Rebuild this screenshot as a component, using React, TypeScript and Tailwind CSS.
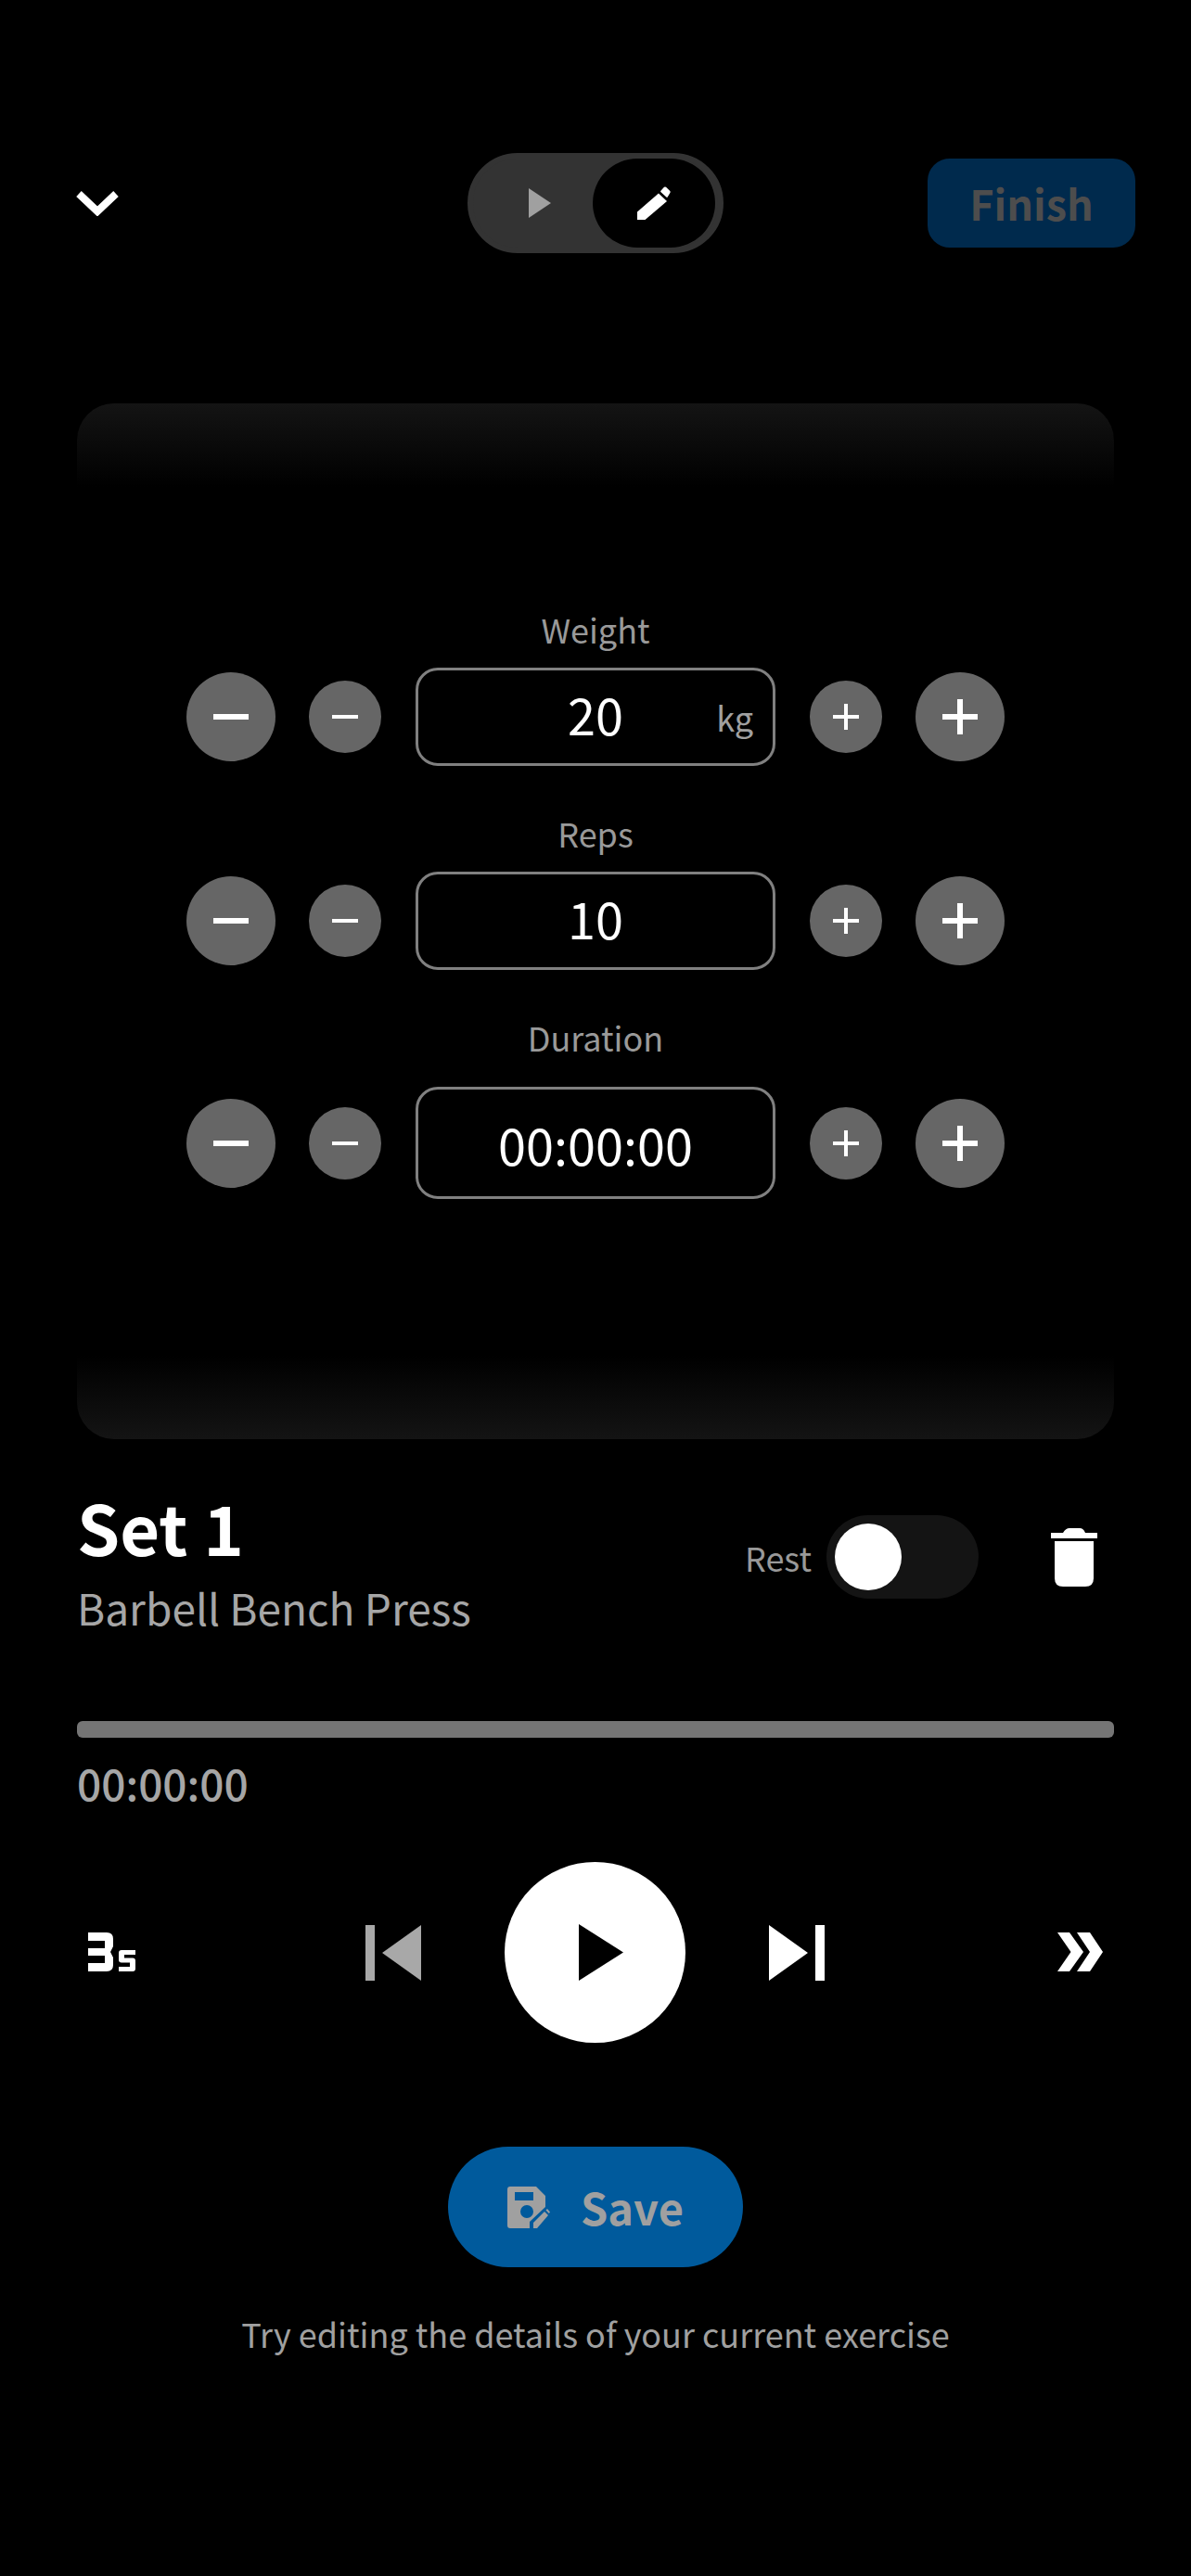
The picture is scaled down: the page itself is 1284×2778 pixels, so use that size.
import React from "react";

function Minus({ big }: { big: boolean }) {
  return big ? (
    <svg width="40" height="40" viewBox="0 0 40 40"><rect x="1" y="17" width="38" height="6" fill="#fff" /></svg>
  ) : (
    <svg width="30" height="30" viewBox="0 0 30 30"><rect x="1" y="13" width="28" height="4" fill="#fff" /></svg>
  );
}
function Plus({ big }: { big: boolean }) {
  return big ? (
    <svg width="40" height="40" viewBox="0 0 40 40"><rect x="1" y="17" width="38" height="6" fill="#fff" /><rect x="17" y="1" width="6" height="38" fill="#fff" /></svg>
  ) : (
    <svg width="30" height="30" viewBox="0 0 30 30"><rect x="1" y="13" width="28" height="4" fill="#fff" /><rect x="13" y="1" width="4" height="28" fill="#fff" /></svg>
  );
}

function Stepper({ label, value, unit, tall, labelGap }: { label: string; value: string; unit?: string; tall?: boolean; labelGap: string }) {
  return (
    <div className="flex flex-col items-center">
      <div className={`text-[36px] leading-[44px] text-[#999999] ${labelGap}`}>{label}</div>
      <div className="flex items-center">
        <div className="w-[96px] h-[96px] rounded-full bg-[#666666] flex items-center justify-center"><Minus big /></div>
        <div className="ml-[36px] w-[78px] h-[78px] rounded-full bg-[#666666] flex items-center justify-center"><Minus big={false} /></div>
        <div className={`relative ml-[37px] w-[388px] ${tall ? "h-[121px]" : "h-[106px]"} rounded-[24px] border-[3px] border-[#808080] flex items-center justify-center text-[54px] text-white`}>
          <span className={tall ? "mt-[2px]" : "mb-[7px]"}>{value}</span>
          {unit && <span className="absolute right-[21px] top-[25px] text-[36px] leading-[50px] text-[#a0a0a0]">{unit}</span>}
        </div>
        <div className="ml-[37px] w-[78px] h-[78px] rounded-full bg-[#666666] flex items-center justify-center"><Plus big={false} /></div>
        <div className="ml-[36px] w-[96px] h-[96px] rounded-full bg-[#666666] flex items-center justify-center"><Plus big /></div>
      </div>
    </div>
  );
}

export default function App() {
  return (
    <div className="w-[1284px] h-[2778px] bg-black overflow-hidden flex flex-col font-['Noto_Sans_CJK_JP',sans-serif]">
      {/* header */}
      <div className="mt-[165px] h-[108px] grid grid-cols-[1fr_auto_1fr] items-center px-[60px]">
        <svg className="ml-[22px]" width="46" height="28" viewBox="0 0 46 28">
          <path d="M3 4 L23 23 L43 4" fill="none" stroke="#fff" strokeWidth="8" />
        </svg>
        <div className="w-[276px] h-[108px] rounded-full bg-[#333333] border-[6px] border-[#333333] flex items-center">
          <div className="flex-1 flex justify-center pl-[15px]">
            <svg width="24" height="32" viewBox="0 0 24 32"><path d="M0 0 L24 16 L0 32 Z" fill="#a0a0a0" /></svg>
          </div>
          <div className="mr-[3px] w-[132px] h-[96px] rounded-full bg-black flex items-center justify-center">
            <svg width="36" height="36" viewBox="0 0 36 36" fill="#fff">
              <path d="M0 36 V27.5 L23 7.5 L32 16 L8.5 36 Z" />
              <path d="M29 0.8 Q30 0 31 0.8 L35.4 5 Q36 6 35.4 7 L32.5 11.8 Q32 12.2 31.3 11.6 L25.3 6 Q24.8 5.4 25.4 4.8 Z" />
            </svg>
          </div>
        </div>
        <div className="justify-self-end w-[224px] h-[96px] rounded-[24px] bg-[#002a4d] flex items-center justify-center text-[45px] font-bold text-[#4d4d4d]">Finish</div>
      </div>

      {/* card */}
      <div className="mt-[162px] mx-[83px] h-[1117px] rounded-[40px] bg-[linear-gradient(to_bottom,#141414_0px,#000000_90px,#000000_1027px,#141414_1117px)] pt-[221px] flex flex-col gap-[50px]">
        <Stepper label="Weight" value="20" unit="kg" labelGap="mb-[20px]" />
        <Stepper label="Reps" value="10" labelGap="mb-[20px]" />
        <Stepper label="Duration" value="00:00:00" tall labelGap="mb-[32px]" />
      </div>

      {/* title row */}
      <div className="mt-[48px] mx-[83px] flex items-start justify-between">
        <div className="flex flex-col">
          <div className="text-[74px] leading-[92px] font-bold text-white">Set 1</div>
          <div className="text-[46px] leading-[60px] text-[#a6a6a6] mt-[11px]">Barbell Bench Press</div>
        </div>
        <div className="flex items-center mt-[34px]">
          <span className="text-[36px] text-[#999999]">Rest</span>
          <div className="ml-[16px] w-[164px] h-[90px] rounded-full bg-[#141414] flex items-center pl-[9px]">
            <div className="w-[72px] h-[72px] rounded-full bg-white"></div>
          </div>
          <svg className="ml-[78px] mr-[18px]" width="50" height="63" viewBox="0 0 50 63" fill="#fff">
            <path d="M0 5 H13 Q16 0 20 0 H31 Q35 0 37 5 H50 V11 H0 Z" />
            <path d="M4 14 H46 V54 Q46 63 37 63 H13 Q4 63 4 54 Z" />
          </svg>
        </div>
      </div>

      {/* progress */}
      <div className="mt-[93px] mx-[83px] h-[18px] rounded-[6px] bg-[#757575]"></div>
      <div className="mt-[21px] mx-[83px] text-[46px] leading-[54px] font-medium text-[#a6a6a6]">00:00:00</div>

      {/* transport */}
      <div className="mt-[59px] h-[195px] relative flex items-center justify-center">
        <svg className="absolute left-[95px] top-[76px]" width="51" height="42" viewBox="0 0 51 42" fill="#fff">
          <path d="M0 0 H20 Q27 0 27 7 V15 L24 21 L27 27 V35 Q27 42 20 42 H0 V33 H18 V25 H0 V17 H18 V9 H0 Z" />
          <path d="M36 19 H51 V24 H39 V27.5 H48 Q51 27.5 51 30.5 V39 Q51 42 48 42 H33 V37 H45 V32.5 H36 Q33 32.5 33 29.5 V22 Q33 19 36 19 Z" />
        </svg>
        <svg width="60" height="60" viewBox="0 0 60 60" fill="#a8a8a8">
          <rect x="0" y="0" width="10" height="60" />
          <path d="M60 0 L18 30 L60 60 Z" />
        </svg>
        <div className="mx-[90px] w-[195px] h-[195px] rounded-full bg-white flex items-center justify-center">
          <svg className="ml-[12px]" width="48" height="61" viewBox="0 0 48 61"><path d="M0 0 L48 30.5 L0 61 Z" fill="#000" /></svg>
        </div>
        <svg className="mr-[1px]" width="60" height="60" viewBox="0 0 60 60" fill="#fff">
          <path d="M0 0 L42 30 L0 60 Z" />
          <rect x="50" y="0" width="10" height="60" />
        </svg>
        <svg className="absolute left-[1140px] top-[76px]" width="49" height="42" viewBox="0 0 49 42" fill="#fff">
          <path d="M0 0 H13 L28 21 L13 42 H0 L14.5 21 Z" />
          <path d="M21 0 H35 L49 21 L35 42 H21 L35 21 Z" />
        </svg>
      </div>

      {/* save */}
      <div className="mt-[112px] self-center w-[318px] h-[130px] rounded-full bg-[#005a9c] flex items-center justify-center gap-[33px] text-[47px] font-bold text-[#a0a0a0]">
        <svg width="46" height="45" viewBox="0 0 46 45" fill="#a0a0a0">
          <path fillRule="evenodd" d="M3 0 H31 L41 10 V22 L24 38 V45 H3 Q0 45 0 42 V3 Q0 0 3 0 Z M8 6 V15 H28 V6 Z M21 20 A7 7 0 1 0 21 34 A7 7 0 1 0 21 20 Z" />
          <path d="M28 45 V39 L40 27 L44 31 L32 45 Z" />
          <path d="M41.5 25.5 L43 24 L46 27.5 L44.8 29 Z" />
        </svg>
        <span>Save</span>
      </div>
      <div className="mt-[46px] text-center text-[36px] leading-[50px] text-[#a0a0a0]">Try editing the details of your current exercise</div>
    </div>
  );
}
